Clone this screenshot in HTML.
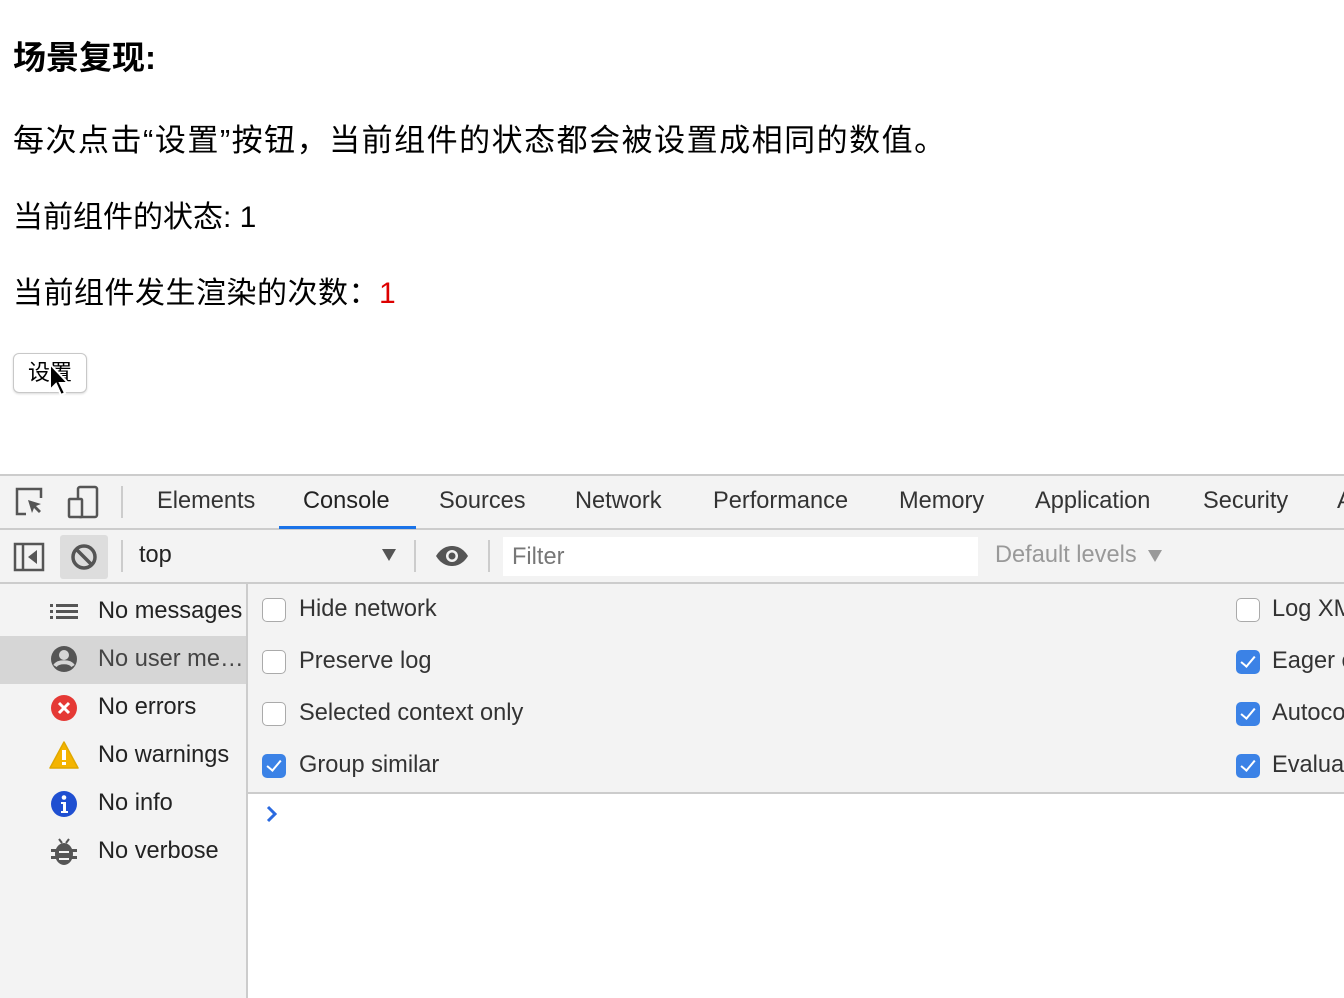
<!DOCTYPE html>
<html><head><meta charset="utf-8"><style>
*{margin:0;padding:0;box-sizing:border-box}
html,body{width:1344px;height:998px;overflow:hidden}
body{background:#fff;font-family:"Liberation Sans","Noto Sans CJK SC",sans-serif;position:relative;color:#000}
#w{position:absolute;left:0;top:0;width:1344px;height:998px;overflow:hidden}
.a{position:absolute;white-space:nowrap}
.dt{font-size:23.6px;color:#333}
.cb{position:absolute;width:24px;height:24px;border:1.5px solid #aaa;border-radius:5px;background:#fff}
.cb.on{background:#3b82e6;border-color:#3b82e6}
.cb.on:after{content:"";position:absolute;left:7px;top:2px;width:6px;height:12px;border:solid #fff;border-width:0 2.5px 2.5px 0;transform:rotate(40deg)}
</style></head><body><div id="w">
<div class="a" style="left:13px;top:31px;font-size:33px;font-weight:bold">场景复现:</div>
<div class="a" style="left:13px;top:115px;font-size:31px;letter-spacing:1.5px">每次点击“设置”按钮，当前组件的状态都会被设置成相同的数值。</div>
<div class="a" style="left:13px;top:192px;font-size:30px">当前组件的状态: 1</div>
<div class="a" style="left:13px;top:268px;font-size:30px;letter-spacing:0.5px">当前组件发生渲染的次数：<span style="color:#d00">1</span></div>
<div class="a" style="left:13px;top:353px;width:74px;height:40px;border:1px solid #c8c8c8;border-radius:6px;background:#fff;box-shadow:0 1px 2px rgba(0,0,0,.15);font-size:22px;text-align:center;line-height:38px">设置</div>
<svg class="a" style="left:48px;top:362px" width="22" height="38" viewBox="0 0 22 38"><path d="M2 2 L2 28 L8 22 L13 33 L17 31 L12 21 L20 21 Z" fill="#000" stroke="#fff" stroke-width="2"/></svg>

<div class="a" style="left:0;top:474px;width:1344px;height:524px;background:#f3f3f3;border-top:2px solid #ccc"></div>
<div class="a" style="left:0;top:528px;width:1344px;height:2px;background:#ccc"></div>
<div class="a" style="left:0;top:582px;width:1344px;height:2px;background:#ccc"></div>
<svg class="a" style="left:14px;top:486px" width="32" height="32" viewBox="0 0 32 32" fill="none" stroke="#555" stroke-width="2.5"><path d="M12 28H3V3h24v9"/><path d="M14 14l4 13 2-5 5 5 2-2-5-5 5-2z" fill="#555" stroke="none"/></svg>
<svg class="a" style="left:66px;top:485px" width="34" height="34" viewBox="0 0 34 34" fill="none" stroke="#555" stroke-width="2.5"><rect x="12" y="2" width="19" height="30" rx="2"/><rect x="3" y="14" width="13" height="18" rx="1" fill="#f3f3f3"/></svg>
<div class="a" style="left:121px;top:486px;width:2px;height:32px;background:#ccc"></div>
<div class="a dt" style="left:157px;top:488px">Elements</div>
<div class="a dt" style="left:303px;top:488px;color:#222">Console</div>
<div class="a" style="left:279px;top:526px;width:137px;height:3px;background:#1a73e8"></div>
<div class="a dt" style="left:439px;top:488px">Sources</div>
<div class="a dt" style="left:575px;top:488px">Network</div>
<div class="a dt" style="left:713px;top:488px">Performance</div>
<div class="a dt" style="left:899px;top:488px">Memory</div>
<div class="a dt" style="left:1035px;top:488px">Application</div>
<div class="a dt" style="left:1203px;top:488px">Security</div>
<div class="a dt" style="left:1337px;top:488px">A</div>
<svg class="a" style="left:13px;top:542px" width="32" height="30" viewBox="0 0 32 30" fill="none" stroke="#555" stroke-width="2.5"><rect x="2" y="2" width="28" height="26"/><path d="M10 2v26"/><path d="M24 8v14l-9-7z" fill="#555" stroke="none"/></svg>
<div class="a" style="left:60px;top:535px;width:48px;height:44px;background:#ddd;border-radius:3px"></div>
<svg class="a" style="left:70px;top:543px" width="28" height="28" viewBox="0 0 28 28" fill="none" stroke="#555" stroke-width="3.5"><circle cx="14" cy="14" r="11"/><path d="M6 6l16 16"/></svg>
<div class="a" style="left:121px;top:540px;width:2px;height:32px;background:#ccc"></div>
<div class="a dt" style="left:139px;top:542px;color:#222">top</div>
<div class="a" style="left:382px;top:549px;width:0;height:0;border-left:7px solid transparent;border-right:7px solid transparent;border-top:12px solid #555"></div>
<div class="a" style="left:414px;top:540px;width:2px;height:32px;background:#ccc"></div>
<svg class="a" style="left:435px;top:545px" width="34" height="22" viewBox="0 0 34 22"><path d="M1 11C6 3 12 1 17 1s11 2 16 10c-5 8-11 10-16 10S6 19 1 11z" fill="#555"/><circle cx="17" cy="11" r="6" fill="#f3f3f3"/><circle cx="17" cy="11" r="3.5" fill="#555"/></svg>
<div class="a" style="left:488px;top:540px;width:2px;height:32px;background:#ccc"></div>
<div class="a" style="left:503px;top:537px;width:475px;height:39px;background:#fff"></div>
<div class="a dt" style="left:512px;top:544px;color:#777">Filter</div>
<div class="a dt" style="left:995px;top:542px;color:#999">Default levels</div>
<div class="a" style="left:1148px;top:550px;width:0;height:0;border-left:7px solid transparent;border-right:7px solid transparent;border-top:12px solid #999"></div>
<div class="a" style="left:246px;top:584px;width:2px;height:414px;background:#ccc"></div>
<div class="a" style="left:0;top:636px;width:246px;height:48px;background:#d6d6d6"></div>
<svg class="a" style="left:50px;top:603px" width="28" height="18" viewBox="0 0 28 18" fill="#555"><rect x="0" y="1" width="3" height="3"/><rect x="6" y="1" width="22" height="3"/><rect x="0" y="7" width="3" height="3"/><rect x="6" y="7" width="22" height="3"/><rect x="0" y="13" width="3" height="3"/><rect x="6" y="13" width="22" height="3"/></svg>
<div class="a dt" style="left:98px;top:598px;color:#222">No messages</div>
<svg class="a" style="left:50px;top:645px" width="28" height="28" viewBox="0 0 28 28"><circle cx="14" cy="14" r="13" fill="#555"/><circle cx="14" cy="10" r="5" fill="#d6d6d6"/><path d="M5 21c3-5 15-5 18 0" stroke="#d6d6d6" stroke-width="4" fill="none"/></svg>
<div class="a" style="left:98px;top:646px;width:147px;overflow:hidden;text-overflow:ellipsis;font-size:23.6px;color:#444">No user messages</div>
<svg class="a" style="left:50px;top:694px" width="28" height="28" viewBox="0 0 28 28"><circle cx="14" cy="14" r="13" fill="#e53935"/><path d="M9 9l10 10M19 9L9 19" stroke="#fff" stroke-width="3"/></svg>
<div class="a dt" style="left:98px;top:694px;color:#222">No errors</div>
<svg class="a" style="left:49px;top:741px" width="30" height="28" viewBox="0 0 30 28"><path d="M15 1L29 27H1z" fill="#f4b400" stroke="#e0a800" stroke-width="1.5" stroke-linejoin="round"/><rect x="13" y="9" width="4" height="10" fill="#fff"/><rect x="13" y="21" width="4" height="3" fill="#fff"/></svg>
<div class="a dt" style="left:98px;top:742px;color:#222">No warnings</div>
<svg class="a" style="left:50px;top:790px" width="28" height="28" viewBox="0 0 28 28"><circle cx="14" cy="14" r="13" fill="#1f4fd1"/><circle cx="14" cy="7.5" r="2.3" fill="#fff"/><path d="M11 12h5v9h2v2h-7v-2h2v-7h-2z" fill="#fff"/></svg>
<div class="a dt" style="left:98px;top:790px;color:#222">No info</div>
<svg class="a" style="left:51px;top:838px" width="26" height="28" viewBox="0 0 26 28" fill="#555"><path d="M8 1l3 4M18 1l-3 4" stroke="#555" stroke-width="2"/><ellipse cx="13" cy="16" rx="9" ry="11"/><rect x="0" y="11" width="26" height="3"/><rect x="0" y="18" width="26" height="3"/><path d="M8 14h10M8 21h10" stroke="#f3f3f3" stroke-width="2"/></svg>
<div class="a dt" style="left:98px;top:838px;color:#222">No verbose</div>
<div class="cb" style="left:262px;top:598px"></div><div class="a dt" style="left:299px;top:596px">Hide network</div>
<div class="cb" style="left:262px;top:650px"></div><div class="a dt" style="left:299px;top:648px">Preserve log</div>
<div class="cb" style="left:262px;top:702px"></div><div class="a dt" style="left:299px;top:700px">Selected context only</div>
<div class="cb on" style="left:262px;top:754px"></div><div class="a dt" style="left:299px;top:752px">Group similar</div>
<div class="cb" style="left:1236px;top:598px"></div><div class="a dt" style="left:1272px;top:596px">Log XML</div>
<div class="cb on" style="left:1236px;top:650px"></div><div class="a dt" style="left:1272px;top:648px">Eager ev</div>
<div class="cb on" style="left:1236px;top:702px"></div><div class="a dt" style="left:1272px;top:700px">Autocom</div>
<div class="cb on" style="left:1236px;top:754px"></div><div class="a dt" style="left:1272px;top:752px">Evaluate</div>
<div class="a" style="left:248px;top:792px;width:1096px;height:206px;background:#fff;border-top:2px solid #ccc"></div>
<svg class="a" style="left:265px;top:805px" width="14" height="18" viewBox="0 0 14 18"><path d="M3 2l7 7-7 7" stroke="#2a6ae0" stroke-width="3" fill="none"/></svg>
</div></body></html>
